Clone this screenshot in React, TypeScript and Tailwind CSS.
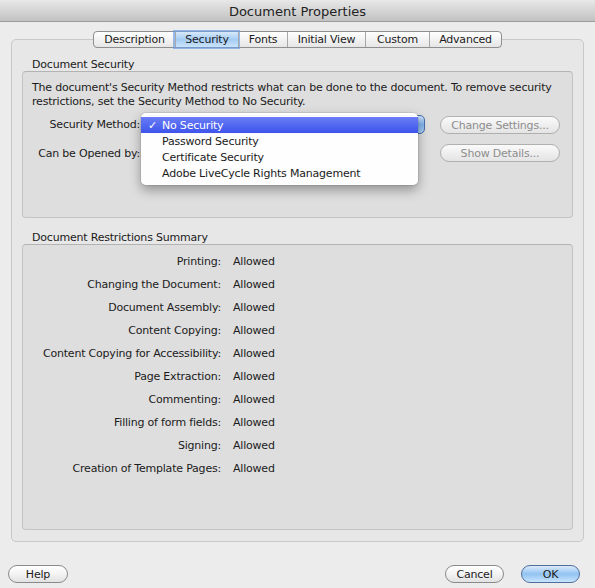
import React from 'react';

type Restriction = { label: string; value: string };

const restrictions: Restriction[] = [
  { label: 'Printing:', value: 'Allowed' },
  { label: 'Changing the Document:', value: 'Allowed' },
  { label: 'Document Assembly:', value: 'Allowed' },
  { label: 'Content Copying:', value: 'Allowed' },
  { label: 'Content Copying for Accessibility:', value: 'Allowed' },
  { label: 'Page Extraction:', value: 'Allowed' },
  { label: 'Commenting:', value: 'Allowed' },
  { label: 'Filling of form fields:', value: 'Allowed' },
  { label: 'Signing:', value: 'Allowed' },
  { label: 'Creation of Template Pages:', value: 'Allowed' },
];

const tabs = [
  { name: 'Description', w: 'w-[81px]' },
  { name: 'Security', w: 'w-[63px]' },
  { name: 'Fonts', w: 'w-[49px]' },
  { name: 'Initial View', w: 'w-[78px]' },
  { name: 'Custom', w: 'w-[64px]' },
  { name: 'Advanced', w: 'w-[72px]' },
];

const methods = ['No Security', 'Password Security', 'Certificate Security', 'Adobe LiveCycle Rights Management'];

function PillButton({ label, className = '', disabled = false, primary = false }: { label: string; className?: string; disabled?: boolean; primary?: boolean }) {
  const skin = primary
    ? 'border-[#4f6f9e] bg-linear-to-b from-[#dbeafb] via-[#92c3f1] to-[#c8e4fd]'
    : disabled
      ? 'border-[#b0b0b0] bg-linear-to-b from-[#fafafa] to-[#e4e4e4] text-[#8d8d8d]'
      : 'border-[#8a8a8a] bg-linear-to-b from-white via-[#f3f3f3] to-[#e2e2e2]';
  return (
    <div className={`flex h-[18px] items-center justify-center rounded-full border pt-[1px] text-[11px] leading-none ${skin} ${className}`}>
      {label}
    </div>
  );
}

export default function App() {
  return (
    <div className="relative flex h-[588px] w-[595px] flex-col overflow-hidden bg-[#ececec] font-['DejaVu_Sans',sans-serif] tracking-[-0.2px] text-[#1b1b1b]">
      {/* window title */}
      <div className="flex h-[22px] items-center justify-center border-b border-[#9c9c9c] bg-linear-to-b from-[#e8e8e8] to-[#c2c2c2] pt-[2px] text-[13px] tracking-normal text-[#222]">
        Document Properties
      </div>

      {/* tab strip */}
      <div className="relative z-10 mt-[9px] flex h-[17px] justify-center">
        <div className="flex rounded-[4px] border border-[#8e8e8e] bg-linear-to-b from-white to-[#e6e6e6]">
          {tabs.map((t, i) => (
            <div
              key={t.name}
              className={`flex items-center justify-center pt-[1px] text-[11px] ${t.w} ${i > 0 ? 'border-l border-[#a8a8a8]' : ''} ${
                t.name === 'Security'
                  ? 'bg-linear-to-b from-[#d8e9fb] via-[#a4ccf3] to-[#cbe3fb] shadow-[0_0_0_2px_rgba(110,160,225,0.7)]'
                  : ''
              } ${i === 0 ? 'rounded-l-[4px]' : ''} ${i === tabs.length - 1 ? 'rounded-r-[4px]' : ''}`}
            >
              {t.name}
            </div>
          ))}
        </div>
      </div>

      {/* tab body */}
      <div className="mx-[11px] -mt-[9px] flex h-[503px] flex-col rounded-[5px] border border-[#c8c8c8] bg-[#e7e7e7] px-[10px] pb-[11px] pt-[17px]">
        <div className="h-[14px] pl-[10px] pt-[1px] text-[11px] leading-[14px]">Document Security</div>
        <div className="h-[147px] rounded-[4px] border border-[#c3c3c3] border-t-[#b3b3b3] bg-[#dedede] pl-[9px] pt-[9px]">
          <p className="whitespace-nowrap text-[11px] leading-[14px]">
            The document's Security Method restricts what can be done to the document. To remove security
            <br />
            restrictions, set the Security Method to No Security.
          </p>
          <div className="mt-[6px] flex h-[19px] items-center">
            <div className="w-[108px] pt-[2px] text-right text-[11px]">Security Method:</div>
            <div className="ml-[5px] h-[19px] w-[280px] rounded-[5px] border border-[#4a6ea8] bg-linear-to-b from-[#cfe3fa] via-[#7fb2ea] to-[#a9d0f6]" />
            <PillButton label="Change Settings..." disabled className="ml-[15px] w-[120px]" />
          </div>
          <div className="mt-[10px] flex h-[18px] items-center">
            <div className="w-[108px] pt-[2px] text-right text-[11px]">Can be Opened by:</div>
            <PillButton label="Show Details..." disabled className="ml-[300px] w-[120px]" />
          </div>
        </div>

        <div className="mt-[12px] h-[14px] pl-[10px] pt-[1px] text-[11px] leading-[14px]">Document Restrictions Summary</div>
        <div className="flex-1 rounded-[4px] border border-[#c3c3c3] border-t-[#b3b3b3] bg-[#dedede] pt-[6px]">
          {restrictions.map((r) => (
            <div key={r.label} className="flex h-[23px] items-center text-[11px]">
              <div className="w-[198px] text-right">{r.label}</div>
              <div className="ml-[12px]">{r.value}</div>
            </div>
          ))}
        </div>
      </div>

      {/* dialog buttons */}
      <div className="mt-[23px] flex items-center justify-between pl-[8px] pr-[15px]">
        <PillButton label="Help" className="w-[60px]" />
        <div className="flex gap-[17px]">
          <PillButton label="Cancel" className="w-[59px]" />
          <PillButton label="OK" primary className="w-[59px]" />
        </div>
      </div>

      {/* open popup menu for the security method */}
      <div className="absolute left-[141px] top-[113px] z-20 h-[72px] w-[277px] rounded-[5px] bg-white/95 pt-[4px] text-[11px] shadow-[0_5px_12px_rgba(0,0,0,0.35),0_0_0_1px_rgba(0,0,0,0.08)]">
        {methods.map((m, i) => (
          <div
            key={m}
            className={`relative h-[16px] pl-[21px] pt-[1px] leading-[16px] ${i === 0 ? 'bg-linear-to-b from-[#6a7cf6] to-[#3e54eb] text-white' : ''}`}
          >
            {i === 0 && <span className="absolute left-[7px] top-[1px]">✓</span>}
            {m}
          </div>
        ))}
      </div>
    </div>
  );
}
